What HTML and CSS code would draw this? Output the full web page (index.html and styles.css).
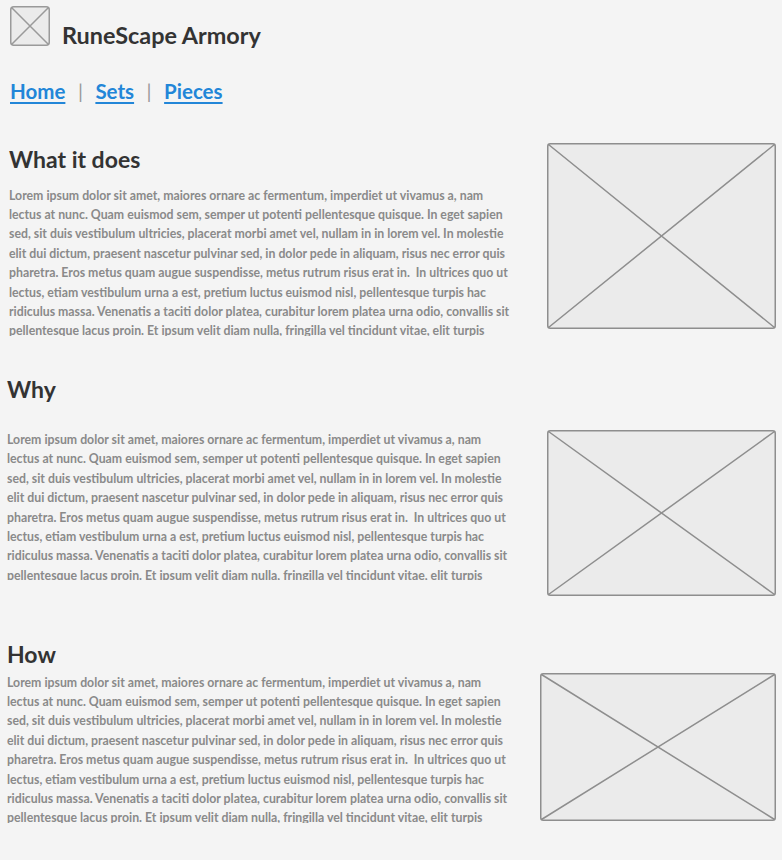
FILE: index.html
```html
<!DOCTYPE html>
<html lang="en">
<head>
<meta charset="utf-8">
<title>RuneScape Armory</title>
<link rel="stylesheet" href="styles.css">
</head>
<body>
<header class="header">
  <svg class="logo" width="40" height="40" viewBox="0 0 40 40">
    <rect x="0.75" y="0.75" width="38.5" height="38.5" rx="3" fill="#ebebeb" stroke="#9a9a9a" stroke-width="1.5"/>
    <path d="M1.5 1.5 L38.5 38.5 M38.5 1.5 L1.5 38.5" stroke="#9a9a9a" stroke-width="1.5"/>
  </svg>
  <h1 class="title">RuneScape Armory</h1>
</header>
<nav class="nav">
  <a href="#" class="nav-link">Home</a><span class="sep">|</span><a href="#" class="nav-link">Sets</a><span class="sep">|</span><a href="#" class="nav-link">Pieces</a>
</nav>

<section class="section section-what">
  <h2 class="heading">What it does</h2>
  <p class="text">Lorem ipsum dolor sit amet, maiores ornare ac fermentum, imperdiet ut vivamus a, nam<br>lectus at nunc. Quam euismod sem, semper ut potenti pellentesque quisque. In eget sapien<br>sed, sit duis vestibulum ultricies, placerat morbi amet vel, nullam in in lorem vel. In molestie<br>elit dui dictum, praesent nascetur pulvinar sed, in dolor pede in aliquam, risus nec error quis<br>pharetra. Eros metus quam augue suspendisse, metus rutrum risus erat in.&nbsp; In ultrices quo ut<br>lectus, etiam vestibulum urna a est, pretium luctus euismod nisl, pellentesque turpis hac<br>ridiculus massa. Venenatis a taciti dolor platea, curabitur lorem platea urna odio, convallis sit<br>pellentesque lacus proin. Et ipsum velit diam nulla, fringilla vel tincidunt vitae, elit turpis<br>mauris, ut sed luctus urna placerat. Sapien amet eu sit, integer nam turpis.</p>
  <svg class="placeholder ph-what" viewBox="0 0 229 186" preserveAspectRatio="none">
    <rect x="0.75" y="0.75" width="227.5" height="184.5" rx="2.5" fill="#ebebeb" stroke="#8e8e8e" stroke-width="1.5"/>
    <path d="M1.5 1.5 L227.5 184.5 M227.5 1.5 L1.5 184.5" stroke="#8e8e8e" stroke-width="1.5"/>
  </svg>
</section>

<section class="section section-why">
  <h2 class="heading">Why</h2>
  <p class="text">Lorem ipsum dolor sit amet, maiores ornare ac fermentum, imperdiet ut vivamus a, nam<br>lectus at nunc. Quam euismod sem, semper ut potenti pellentesque quisque. In eget sapien<br>sed, sit duis vestibulum ultricies, placerat morbi amet vel, nullam in in lorem vel. In molestie<br>elit dui dictum, praesent nascetur pulvinar sed, in dolor pede in aliquam, risus nec error quis<br>pharetra. Eros metus quam augue suspendisse, metus rutrum risus erat in.&nbsp; In ultrices quo ut<br>lectus, etiam vestibulum urna a est, pretium luctus euismod nisl, pellentesque turpis hac<br>ridiculus massa. Venenatis a taciti dolor platea, curabitur lorem platea urna odio, convallis sit<br>pellentesque lacus proin. Et ipsum velit diam nulla, fringilla vel tincidunt vitae, elit turpis<br>mauris, ut sed luctus urna placerat. Sapien amet eu sit, integer nam turpis.</p>
  <svg class="placeholder ph-why" viewBox="0 0 229 166" preserveAspectRatio="none">
    <rect x="0.75" y="0.75" width="227.5" height="164.5" rx="2.5" fill="#ebebeb" stroke="#8e8e8e" stroke-width="1.5"/>
    <path d="M1.5 1.5 L227.5 164.5 M227.5 1.5 L1.5 164.5" stroke="#8e8e8e" stroke-width="1.5"/>
  </svg>
</section>

<section class="section section-how">
  <h2 class="heading">How</h2>
  <p class="text">Lorem ipsum dolor sit amet, maiores ornare ac fermentum, imperdiet ut vivamus a, nam<br>lectus at nunc. Quam euismod sem, semper ut potenti pellentesque quisque. In eget sapien<br>sed, sit duis vestibulum ultricies, placerat morbi amet vel, nullam in in lorem vel. In molestie<br>elit dui dictum, praesent nascetur pulvinar sed, in dolor pede in aliquam, risus nec error quis<br>pharetra. Eros metus quam augue suspendisse, metus rutrum risus erat in.&nbsp; In ultrices quo ut<br>lectus, etiam vestibulum urna a est, pretium luctus euismod nisl, pellentesque turpis hac<br>ridiculus massa. Venenatis a taciti dolor platea, curabitur lorem platea urna odio, convallis sit<br>pellentesque lacus proin. Et ipsum velit diam nulla, fringilla vel tincidunt vitae, elit turpis<br>mauris, ut sed luctus urna placerat. Sapien amet eu sit, integer nam turpis.</p>
  <svg class="placeholder ph-how" viewBox="0 0 236 148" preserveAspectRatio="none">
    <rect x="0.75" y="0.75" width="234.5" height="146.5" rx="2.5" fill="#ebebeb" stroke="#8e8e8e" stroke-width="1.5"/>
    <path d="M1.5 1.5 L234.5 146.5 M234.5 1.5 L1.5 146.5" stroke="#8e8e8e" stroke-width="1.5"/>
  </svg>
</section>
</body>
</html>
```

FILE: styles.css
```css
html, body {
  margin: 0;
  padding: 0;
  background: #f4f4f4;
}

body {
  font-family: Lato, "Open Sans", "Noto Sans", sans-serif;
  color: #333333;
  width: 782px;
  height: 860px;
  overflow: hidden;
}

.header {
  display: flex;
  align-items: flex-start;
  gap: 12px;
  padding: 6px 10px 0 10px;
}

.logo {
  display: block;
  flex: none;
}

.title {
  margin: 16px 0 0 0;
  font-size: 23.4px;
  font-weight: 700;
  color: #333333;
  line-height: 26px;
}

.nav {
  display: flex;
  align-items: center;
  padding: 0 10px;
  margin-top: 30px;
  height: 26px;
  font-size: 20.5px;
  font-weight: 700;
  line-height: 26px;
}

.nav-link {
  color: #2286d8;
  text-decoration: underline;
  text-underline-offset: 3px;
  text-decoration-thickness: 2px;
}

.sep {
  color: #999999;
  font-weight: 400;
  font-size: 20px;
  padding: 0 12.5px;
}

.section {
  display: grid;
  grid-template-columns: 1fr auto;
  align-items: start;
  padding: 0 6px 0 9px;
}

.heading {
  grid-column: 1;
  grid-row: 1;
  margin: 0;
  font-size: 23px;
  font-weight: 700;
  line-height: 26px;
  color: #333333;
}

.text {
  grid-column: 1;
  grid-row: 2;
  margin: 0;
  font-size: 12.3px;
  font-weight: 700;
  line-height: 19.4px;
  color: #8a8a8a;
  white-space: nowrap;
  height: 150px;
  overflow: hidden;
}

.placeholder {
  grid-column: 2;
  display: block;
}

/* What it does */
.section-what {
  margin-top: 39px;
}
.section-what .heading {
  margin-top: 3px;
}
.section-what .text {
  margin-top: 13.5px;
}
.ph-what {
  grid-row: 1 / span 2;
  width: 229px;
  height: 186px;
}

/* Why */
.section-why {
  margin-top: 40px;
  padding-left: 7px;
}
.section-why .text {
  margin-top: 28.5px;
}
.ph-why {
  grid-row: 2;
  margin-top: 28px;
  width: 229px;
  height: 166px;
}

/* How */
.section-how {
  margin-top: 45.5px;
  padding-left: 7px;
}
.section-how .text {
  margin-top: 5.5px;
}
.ph-how {
  grid-row: 2;
  margin-top: 5.5px;
  width: 236px;
  height: 148px;
}
```
